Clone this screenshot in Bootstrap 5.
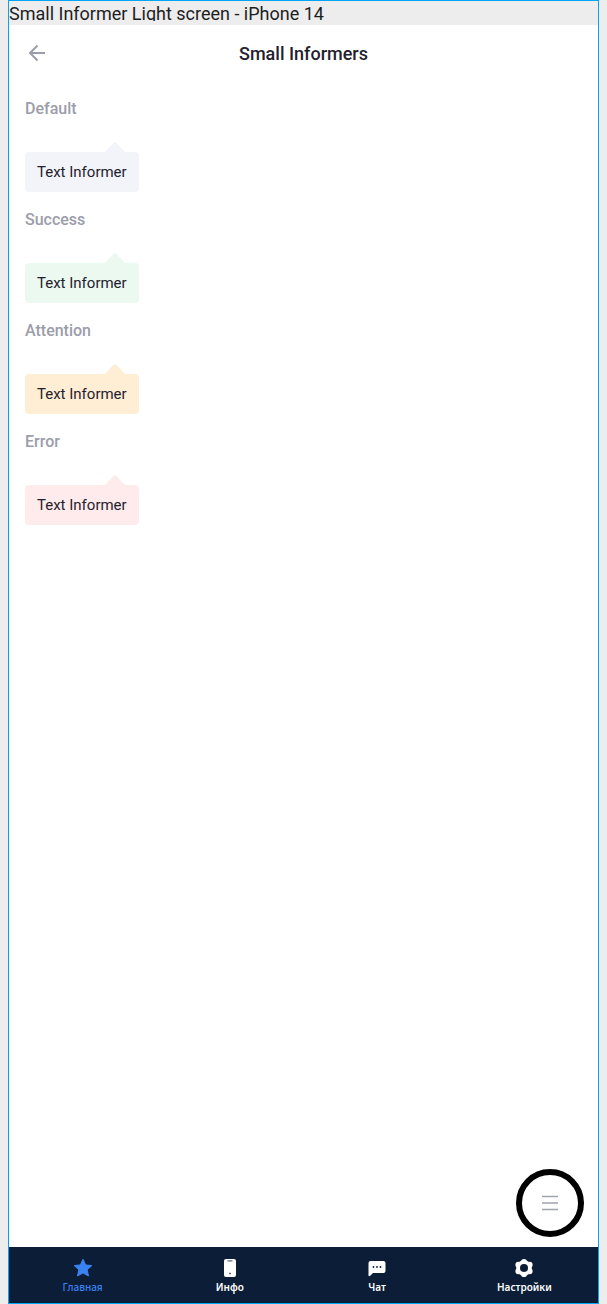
<!DOCTYPE html>
<html lang="en">
<head>
<meta charset="utf-8">
<meta name="viewport" content="width=device-width, initial-scale=1">
<title>Small Informers</title>
<link href="https://cdn.jsdelivr.net/npm/bootstrap@5.3.0/dist/css/bootstrap.min.css" rel="stylesheet">
<style>
  body { background: #ededed; color: #1f222e; font-family: Roboto, "Liberation Sans", sans-serif; }
  .screen { border: 1px solid #00a6f5; margin: 0 8px; }
  .screen-name { background: #ededed; color: #1d1d1f; font-size: 18px; line-height: 26px; height: 20px; }
  .screen-name-bar { background: #ededed; height: 24px; }
  .topbar { height: 56px; }
  .topbar-title { font-size: 18px; line-height: 24px; font-weight: 500; padding-top: 2px; }
  .side { width: 24px; height: 24px; }
  .group-title { color: #9b9daa; font-size: 16px; line-height: 24px; font-weight: 500; }
  .informer { position: relative; margin-top: 31px; padding: 8px 12px; border-radius: 4px; font-size: 15px; line-height: 24px; background: var(--tone); }
  .informer svg { position: absolute; right: 14px; bottom: 100%; fill: var(--tone); }
  .tone-default { --tone: #f3f4f9; }
  .tone-success { --tone: #ebf9f0; }
  .tone-attention { --tone: #ffedd4; }
  .tone-error { --tone: #ffebeb; }
  .fab { width: 68px; height: 68px; border: 6px solid #000; background: #fff; color: #a0a3b0; margin: 0 14px 10px; }
  .tabs { background: #0b1d37; height: 56px; }
  .tab { color: #fff; font-family: "Noto Sans", sans-serif; font-size: 10px; line-height: 14px; font-weight: 600; padding-top: 9px; }
  .tab.active { color: #3a83f1; font-weight: 500; }
</style>
</head>
<body>
<div class="screen d-flex flex-column min-vh-100 bg-white">
  <div class="screen-name-bar"><div class="screen-name overflow-hidden text-nowrap">Small Informer Light screen - iPhone 14</div></div>
  <header class="topbar d-flex align-items-center justify-content-between px-3">
    <button type="button" class="btn p-0 border-0 side d-flex" aria-label="Back">
      <svg width="24" height="24" viewBox="0 0 24 24" fill="none" stroke="#9b9daa" stroke-width="2"><path d="M20 12H5.500M12.500 4.500 5 12l7.500 7.500"/></svg>
    </button>
    <h1 class="topbar-title mb-0">Small Informers</h1>
    <span class="side"></span>
  </header>
  <main class="flex-grow-1 px-3 pt-3">
    <section class="mb-3 d-flex flex-column align-items-start">
      <h2 class="group-title m-0">Default</h2>
      <div class="informer tone-default"><svg width="20" height="10" viewBox="0 0 20 10"><path d="M0 10 8.200 1.200Q10-.8 11.800 1.200L20 10Z"/></svg>Text Informer</div>
    </section>
    <section class="mb-3 d-flex flex-column align-items-start">
      <h2 class="group-title m-0">Success</h2>
      <div class="informer tone-success"><svg width="20" height="10" viewBox="0 0 20 10"><path d="M0 10 8.200 1.200Q10-.8 11.800 1.200L20 10Z"/></svg>Text Informer</div>
    </section>
    <section class="mb-3 d-flex flex-column align-items-start">
      <h2 class="group-title m-0">Attention</h2>
      <div class="informer tone-attention"><svg width="20" height="10" viewBox="0 0 20 10"><path d="M0 10 8.200 1.200Q10-.8 11.800 1.200L20 10Z"/></svg>Text Informer</div>
    </section>
    <section class="mb-3 d-flex flex-column align-items-start">
      <h2 class="group-title m-0">Error</h2>
      <div class="informer tone-error"><svg width="20" height="10" viewBox="0 0 20 10"><path d="M0 10 8.200 1.200Q10-.8 11.800 1.200L20 10Z"/></svg>Text Informer</div>
    </section>
  </main>
  <button type="button" class="fab rounded-circle align-self-end d-flex align-items-center justify-content-center p-0" aria-label="Menu">
    <svg width="24" height="24" viewBox="0 0 24 24" fill="none" stroke="currentColor" stroke-width="1.400"><path d="M4 5.500h16M4 12h16M4 18.500h16"/></svg>
  </button>
  <nav class="tabs row row-cols-4 g-0 text-center">
    <a href="#" class="tab active col d-flex flex-column align-items-center text-decoration-none" aria-current="page">
      <svg width="24" height="24" viewBox="0 0 24 24" fill="currentColor" stroke="currentColor" stroke-linejoin="round"><path d="m12 3.200 2.600 5.700 6.200.7-4.600 4.200 1.300 6.200-5.500-3.100L6.500 20l1.300-6.200-4.600-4.200 6.200-.7Z"/></svg>
      Главная
    </a>
    <a href="#" class="tab col d-flex flex-column align-items-center text-decoration-none">
      <svg width="24" height="24" viewBox="0 0 24 24"><rect x="6" y="3" width="12" height="18" rx="2" fill="#fff"/><path d="M9.500 4.800h5M11 17.500h2" stroke="#5d6a7e" stroke-width="1.300"/></svg>
      Инфо
    </a>
    <a href="#" class="tab col d-flex flex-column align-items-center text-decoration-none">
      <svg width="24" height="24" viewBox="0 0 24 24"><path d="M5.500 5h13a2 2 0 0 1 2 2v8a2 2 0 0 1-2 2H8l-2.800 2.800Q3.500 21 3.500 19V7a2 2 0 0 1 2-2Z" fill="#fff"/><g fill="#0b1d37"><circle cx="8.500" cy="11" r=".9"/><circle cx="12" cy="11" r=".9"/><circle cx="15.500" cy="11" r=".9"/></g></svg>
      Чат
    </a>
    <a href="#" class="tab col d-flex flex-column align-items-center text-decoration-none">
      <svg width="24" height="24" viewBox="0 0 24 24"><g fill="#fff"><circle cx="12" cy="12" r="7.800"/><circle cx="12" cy="5.800" r="2.900"/><circle cx="12" cy="18.200" r="2.900"/><circle cx="6.400" cy="8.700" r="3"/><circle cx="17.600" cy="8.700" r="3"/><circle cx="6.400" cy="15.300" r="3"/><circle cx="17.600" cy="15.300" r="3"/></g><circle cx="12" cy="12" r="4" fill="#0b1d37"/></svg>
      Настройки
    </a>
  </nav>
</div>
<script src="https://cdn.jsdelivr.net/npm/bootstrap@5.3.0/dist/js/bootstrap.bundle.min.js"></script>
</body>
</html>
